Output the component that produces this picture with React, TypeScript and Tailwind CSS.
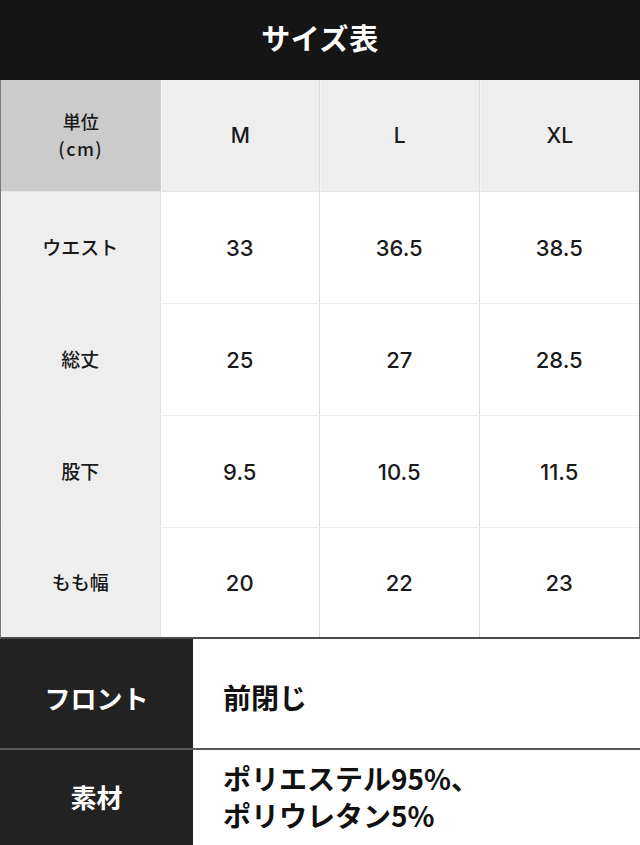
const jp = "font-['Noto_Sans_CJK_JP','Noto_Sans',sans-serif]";
const num = "font-['Inter','Noto_Sans_CJK_JP',sans-serif]";

const sizes = ['M', 'L', 'XL'];

const rows = [
  { label: 'ウエスト', values: ['33', '36.5', '38.5'] },
  { label: '総丈', values: ['25', '27', '28.5'] },
  { label: '股下', values: ['9.5', '10.5', '11.5'] },
  { label: 'もも幅', values: ['20', '22', '23'] },
];

const specs = [
  { label: 'フロント', lines: ['前閉じ'], h: 'h-[111px]', pad: 'pt-[8px]' },
  { label: '素材', lines: ['ポリエステル95%、', 'ポリウレタン5%'], h: 'h-[95px]', pad: 'pb-[2px]' },
];

export default function App() {
  return (
    <div className={`w-[640px] h-[845px] overflow-hidden bg-white text-[#1a1a1a] ${jp}`}>
      {/* Title */}
      <div className="h-[80px] bg-[#151515] flex items-center justify-center">
        <h1 className="text-[29px] font-bold text-white tracking-[0.02em] pb-[4px]">サイズ表</h1>
      </div>

      {/* Size table */}
      <div className="border-x border-[#7a7a7a] border-b-2 border-b-[#4a4a4a]">
        <div className="grid grid-cols-4 h-[112px] border-b border-[#e6e6e6]">
          <div className="bg-[#cbcbcb] flex flex-col items-center justify-center text-[18px] font-medium leading-[27px] pb-[2px]">
            <span>単位</span>
            <span className="tracking-[0.08em]">(cm)</span>
          </div>
          {sizes.map((s, i) => (
            <div
              key={s}
              className={`bg-[#eeeeee] flex items-center justify-center text-[21px] font-medium ${num} ${i < 2 ? 'border-r border-[#dcdcdc]' : ''} border-l border-l-[#f7f7f7]`}
            >
              {s}
            </div>
          ))}
        </div>
        {rows.map((r, ri) => (
          <div
            key={r.label}
            className={`grid grid-cols-4 ${ri === rows.length - 1 ? 'h-[109px]' : 'h-[112px] border-b border-[#ececec]'}`}
          >
            <div className="bg-[#eeeeee] flex items-center justify-center text-[19px] font-medium border-r border-[#e2e2e2]">
              {r.label}
            </div>
            {r.values.map((v, i) => (
              <div
                key={i}
                className={`flex items-center justify-center text-[22px] font-medium pt-[2px] ${num} ${i < 2 ? 'border-r border-[#dcdcdc]' : ''}`}
              >
                {v}
              </div>
            ))}
          </div>
        ))}
      </div>

      {/* Spec rows */}
      {specs.map((s, si) => (
        <div key={s.label} className={`flex ${s.h} ${si === 0 ? 'border-b-2 border-[#5a5a5a]' : ''}`}>
          <div className={`w-[193px] bg-[#222222] flex items-center justify-center text-white text-[26px] font-bold ${s.pad}`}>
            {s.label}
          </div>
          <div className={`flex-1 flex flex-col justify-center pl-[30px] text-[28px] font-bold leading-[37px] text-[#111] ${s.pad}`}>
            {s.lines.map((l) => (
              <span key={l}>{l}</span>
            ))}
          </div>
        </div>
      ))}
    </div>
  );
}
